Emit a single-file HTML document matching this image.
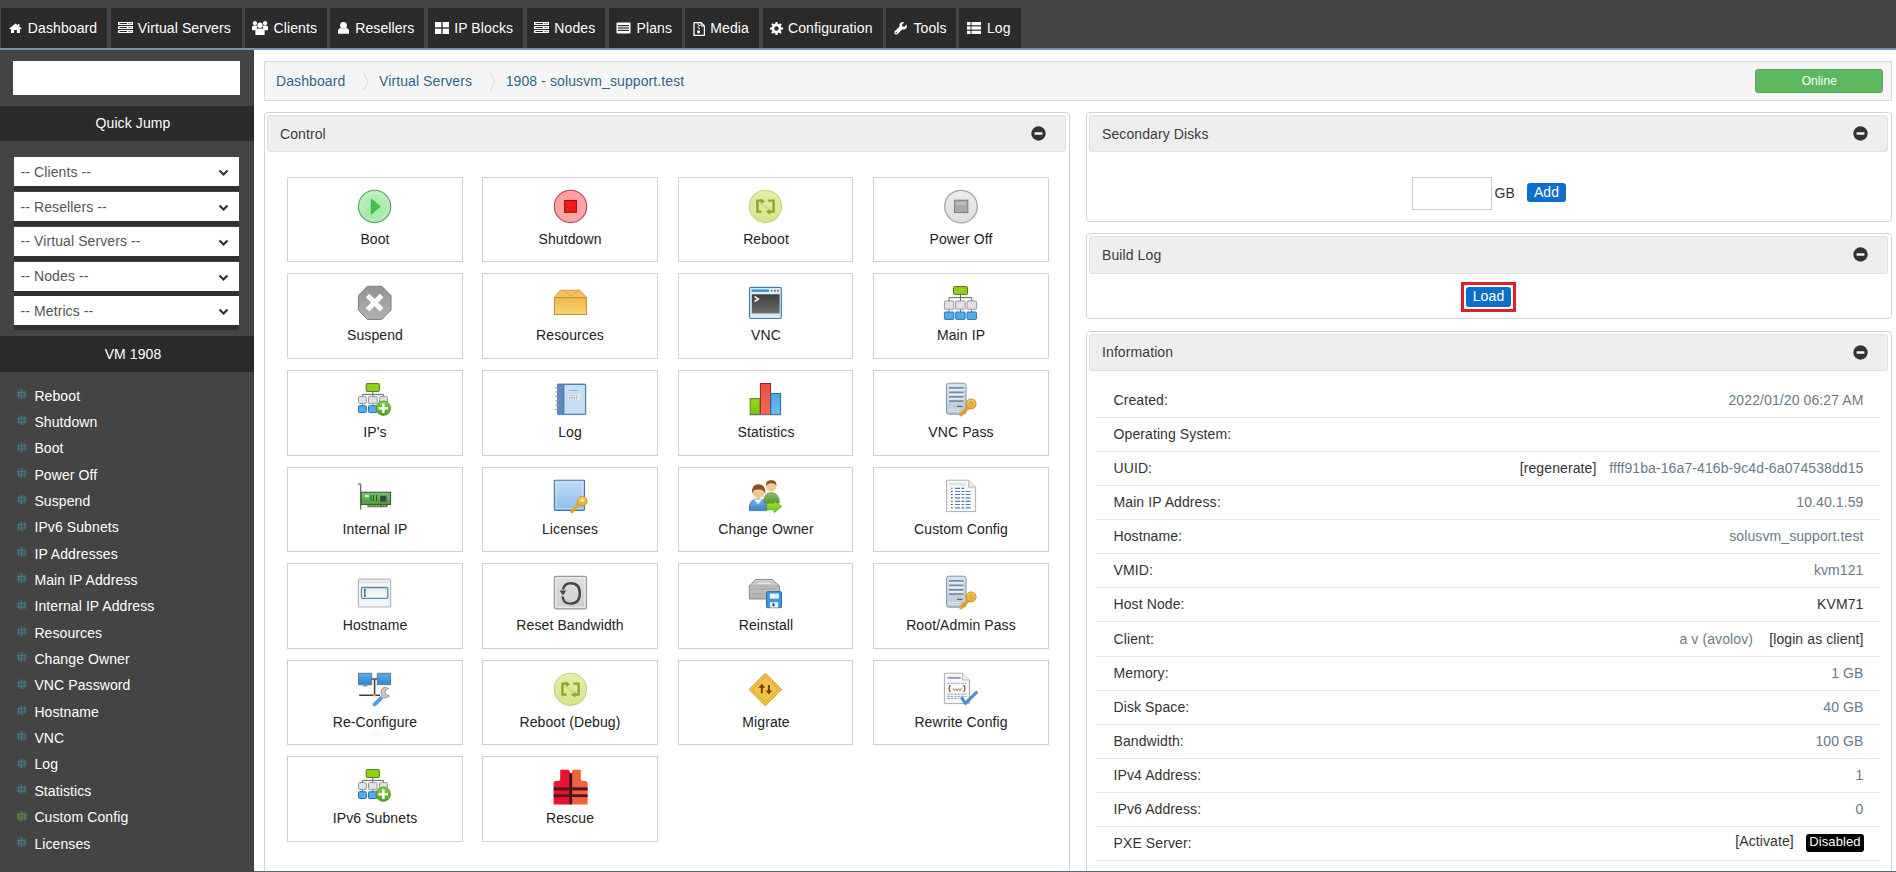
<!DOCTYPE html><html><head><meta charset="utf-8"><title>SolusVM</title><style>
*{box-sizing:border-box;margin:0;padding:0}
html,body{width:1896px;height:872px;overflow:hidden;background:#fff;font-family:"Liberation Sans", sans-serif;}
.a{position:absolute}
.t{position:absolute;white-space:nowrap;letter-spacing:0.1px}
</style></head><body>
<div class="a" style="left:0;top:0;width:1896px;height:48px;background:#454545"></div>
<div class="a" style="left:0;top:48px;width:1896px;height:2px;background:#7a8fb1"></div>
<div class="a" style="left:1px;top:8px;width:106px;height:40px;background:#2b2b2b"></div>
<div class="a" style="left:9px;top:22.7px;line-height:0"><svg width="13" height="10.5" viewBox="0 0 14 12" preserveAspectRatio="none"><path d="M7 0.5 L0.3 6.2 L1.3 7.2 L2.2 6.5 V11.5 H5.5 V8 H8.5 V11.5 H11.8 V6.5 L12.7 7.2 L13.7 6.2 L11.2 4.1 V1 H9.6 V2.7 Z" fill="#fff"/></svg></div>
<div class="t" style="left:27.8px;top:19.65px;font-size:14px;line-height:17px;color:#fff;font-weight:normal;">Dashboard</div>
<div class="a" style="left:111px;top:8px;width:131px;height:40px;background:#2b2b2b"></div>
<div class="a" style="left:118px;top:22px;line-height:0"><svg width="15" height="12" viewBox="0 0 15 12"><g fill="#fff"><rect x="0" y="0" width="15" height="3"/><rect x="0" y="4" width="15" height="3"/><rect x="0" y="8" width="15" height="3"/></g><g fill="#2b2b2b"><rect x="1.5" y="1" width="7.5" height="1"/><rect x="1.5" y="5" width="7.5" height="1"/><rect x="1.5" y="9" width="7.5" height="1"/><rect x="10.5" y="1" width="1" height="1"/><rect x="12.5" y="1" width="1" height="1"/><rect x="10.5" y="5" width="1" height="1"/><rect x="12.5" y="5" width="1" height="1"/><rect x="10.5" y="9" width="1" height="1"/><rect x="12.5" y="9" width="1" height="1"/></g></svg></div>
<div class="t" style="left:137.8px;top:19.65px;font-size:14px;line-height:17px;color:#fff;font-weight:normal;">Virtual Servers</div>
<div class="a" style="left:245.2px;top:8px;width:81.40000000000003px;height:40px;background:#2b2b2b"></div>
<div class="a" style="left:252px;top:21px;line-height:0"><svg width="16" height="14" viewBox="0 0 16 14"><g fill="#fff"><circle cx="2.9" cy="2.2" r="2.1"/><circle cx="13.1" cy="2.2" r="2.1"/><path d="M0 9.2 V6.2 Q0 4.4 2 4.4 H4 Q5 4.4 5.4 5.2 Q4.6 6.6 4.6 9.2 Z"/><path d="M16 9.2 V6.2 Q16 4.4 14 4.4 H12 Q11 4.4 10.6 5.2 Q11.4 6.6 11.4 9.2 Z"/><circle cx="8" cy="4.3" r="2.7"/><path d="M3.4 13.9 V10.2 Q3.4 7.4 6 7.4 H10 Q12.6 7.4 12.6 10.2 V13.9 Z"/></g></svg></div>
<div class="t" style="left:273.5px;top:19.65px;font-size:14px;line-height:17px;color:#fff;font-weight:normal;">Clients</div>
<div class="a" style="left:330.2px;top:8px;width:93.90000000000003px;height:40px;background:#2b2b2b"></div>
<div class="a" style="left:338px;top:22px;line-height:0"><svg width="11" height="12" viewBox="0 0 11 12"><g fill="#fff"><circle cx="5.5" cy="3.4" r="3.4"/><path d="M0 11.8 V9.5 Q0 6.3 3 6.1 Q5.5 7.9 8 6.1 Q11 6.3 11 9.5 V11.8 Z"/></g></svg></div>
<div class="t" style="left:355.2px;top:19.65px;font-size:14px;line-height:17px;color:#fff;font-weight:normal;">Resellers</div>
<div class="a" style="left:428.1px;top:8px;width:94.69999999999993px;height:40px;background:#2b2b2b"></div>
<div class="a" style="left:435px;top:22px;line-height:0"><svg width="14" height="12" viewBox="0 0 14 12"><g fill="#fff"><rect x="0" y="0" width="6.3" height="5.3"/><rect x="7.7" y="0" width="6.3" height="5.3"/><rect x="0" y="6.7" width="6.3" height="5.3"/><rect x="7.7" y="6.7" width="6.3" height="5.3"/></g></svg></div>
<div class="t" style="left:454.2px;top:19.65px;font-size:14px;line-height:17px;color:#fff;font-weight:normal;">IP Blocks</div>
<div class="a" style="left:527px;top:8px;width:78px;height:40px;background:#2b2b2b"></div>
<div class="a" style="left:534px;top:22px;line-height:0"><svg width="15" height="12" viewBox="0 0 15 12"><g fill="#fff"><rect x="0" y="0" width="15" height="3"/><rect x="0" y="4" width="15" height="3"/><rect x="0" y="8" width="15" height="3"/></g><g fill="#2b2b2b"><rect x="1.5" y="1" width="7.5" height="1"/><rect x="1.5" y="5" width="7.5" height="1"/><rect x="1.5" y="9" width="7.5" height="1"/><rect x="10.5" y="1" width="1" height="1"/><rect x="12.5" y="1" width="1" height="1"/><rect x="10.5" y="5" width="1" height="1"/><rect x="12.5" y="5" width="1" height="1"/><rect x="10.5" y="9" width="1" height="1"/><rect x="12.5" y="9" width="1" height="1"/></g></svg></div>
<div class="t" style="left:554.3px;top:19.65px;font-size:14px;line-height:17px;color:#fff;font-weight:normal;">Nodes</div>
<div class="a" style="left:609.3px;top:8px;width:72.70000000000005px;height:40px;background:#2b2b2b"></div>
<div class="a" style="left:616px;top:22px;line-height:0"><svg width="15" height="12" viewBox="0 0 15 12"><rect x="0.5" y="0.5" width="14" height="11" rx="1" fill="#fff"/><g fill="#2b2b2b"><rect x="2" y="3" width="11" height="1.2"/><rect x="2" y="5.4" width="11" height="1.2"/><rect x="2" y="7.8" width="11" height="1.2"/></g></svg></div>
<div class="t" style="left:636.5px;top:19.65px;font-size:14px;line-height:17px;color:#fff;font-weight:normal;">Plans</div>
<div class="a" style="left:685.1px;top:8px;width:73.89999999999998px;height:40px;background:#2b2b2b"></div>
<div class="a" style="left:693px;top:22px;line-height:0"><svg width="12" height="14" viewBox="0 0 12 14"><path d="M1 0.6 H8 L11.4 4 V13.4 H1 Z" fill="none" stroke="#fff" stroke-width="1.3"/><path d="M8 0.6 V4 H11.4" fill="none" stroke="#fff" stroke-width="1"/><g fill="#fff"><rect x="4.5" y="1.5" width="1.5" height="1.2"/><rect x="5.5" y="3" width="1.5" height="1.2"/><rect x="4.5" y="4.5" width="1.5" height="1.2"/><rect x="5.5" y="6" width="1.5" height="1.2"/><circle cx="5.6" cy="9.8" r="1.6"/></g></svg></div>
<div class="t" style="left:710.3px;top:19.65px;font-size:14px;line-height:17px;color:#fff;font-weight:normal;">Media</div>
<div class="a" style="left:763.3px;top:8px;width:119.70000000000005px;height:40px;background:#2b2b2b"></div>
<div class="a" style="left:770px;top:22px;line-height:0"><svg width="13" height="13" viewBox="0 0 14 14"><path fill="#fff" d="M6 0 H8 L8.4 2 L9.6 2.5 L11.3 1.4 L12.6 2.7 L11.5 4.4 L12 5.6 L14 6 V8 L12 8.4 L11.5 9.6 L12.6 11.3 L11.3 12.6 L9.6 11.5 L8.4 12 L8 14 H6 L5.6 12 L4.4 11.5 L2.7 12.6 L1.4 11.3 L2.5 9.6 L2 8.4 L0 8 V6 L2 5.6 L2.5 4.4 L1.4 2.7 L2.7 1.4 L4.4 2.5 L5.6 2 Z M7 4.6 A2.4 2.4 0 1 0 7 9.4 A2.4 2.4 0 1 0 7 4.6 Z"/></svg></div>
<div class="t" style="left:788.0px;top:19.65px;font-size:14px;line-height:17px;color:#fff;font-weight:normal;">Configuration</div>
<div class="a" style="left:886.1px;top:8px;width:69.89999999999998px;height:40px;background:#2b2b2b"></div>
<div class="a" style="left:894px;top:22px;line-height:0"><svg width="13" height="13" viewBox="0 0 13 13"><path fill="#fff" d="M12.6 2.6 L10.4 4.8 L8.3 4.6 L8.1 2.6 L10.3 0.4 Q7.7 -0.6 6.3 1 Q5 2.5 5.6 4.4 L0.7 9.3 Q-0.2 10.6 0.8 11.9 Q2.2 13.1 3.6 12 L8.5 7.3 Q10.6 7.9 12 6.5 Q13.4 5 12.6 2.6 Z"/><circle cx="2.2" cy="10.8" r="0.8" fill="#2b2b2b"/></svg></div>
<div class="t" style="left:913.5px;top:19.65px;font-size:14px;line-height:17px;color:#fff;font-weight:normal;">Tools</div>
<div class="a" style="left:959.1px;top:8px;width:61.60000000000002px;height:40px;background:#2b2b2b"></div>
<div class="a" style="left:967px;top:22px;line-height:0"><svg width="14" height="12" viewBox="0 0 14 12"><g fill="#fff"><rect x="0" y="0" width="3.5" height="3.2"/><rect x="4.5" y="0" width="9.5" height="3.2"/><rect x="0" y="4.4" width="3.5" height="3.2"/><rect x="4.5" y="4.4" width="9.5" height="3.2"/><rect x="0" y="8.8" width="3.5" height="3.2"/><rect x="4.5" y="8.8" width="9.5" height="3.2"/></g></svg></div>
<div class="t" style="left:986.9px;top:19.65px;font-size:14px;line-height:17px;color:#fff;font-weight:normal;">Log</div>
<div class="a" style="left:0;top:50px;width:254px;height:822px;background:#444"></div>
<div class="a" style="left:253px;top:50px;width:1px;height:822px;background:#3a3a3a"></div>
<div class="a" style="left:13px;top:61px;width:227px;height:34px;background:#fff"></div>
<div class="a" style="left:0;top:106px;width:254px;height:34.5px;background:#2b2b2b"></div>
<div class="t" style="left:-167px;width:600px;text-align:center;top:115.05px;font-size:14px;line-height:17px;color:#fff;font-weight:normal;">Quick Jump</div>
<div class="a" style="left:14px;top:157px;width:225px;height:29px;background:#fff"></div>
<div class="a" style="left:14px;top:186px;width:225px;height:5px;background:#303030"></div>
<div class="t" style="left:20.5px;top:164.25px;font-size:14px;line-height:17px;color:#555;font-weight:normal;">-- Clients --</div>
<svg class="a" style="left:218px;top:169px" width="11" height="8" viewBox="0 0 11 8"><path d="M1.5 1.5 L5.5 5.5 L9.5 1.5" fill="none" stroke="#333" stroke-width="2.2"/></svg>
<div class="a" style="left:14px;top:192px;width:225px;height:29px;background:#fff"></div>
<div class="a" style="left:14px;top:221px;width:225px;height:5px;background:#303030"></div>
<div class="t" style="left:20.5px;top:199.25px;font-size:14px;line-height:17px;color:#555;font-weight:normal;">-- Resellers --</div>
<svg class="a" style="left:218px;top:204px" width="11" height="8" viewBox="0 0 11 8"><path d="M1.5 1.5 L5.5 5.5 L9.5 1.5" fill="none" stroke="#333" stroke-width="2.2"/></svg>
<div class="a" style="left:14px;top:227px;width:225px;height:29px;background:#fff"></div>
<div class="a" style="left:14px;top:256px;width:225px;height:5px;background:#303030"></div>
<div class="t" style="left:20.5px;top:233.25px;font-size:14px;line-height:17px;color:#555;font-weight:normal;">-- Virtual Servers --</div>
<svg class="a" style="left:218px;top:239px" width="11" height="8" viewBox="0 0 11 8"><path d="M1.5 1.5 L5.5 5.5 L9.5 1.5" fill="none" stroke="#333" stroke-width="2.2"/></svg>
<div class="a" style="left:14px;top:262px;width:225px;height:29px;background:#fff"></div>
<div class="a" style="left:14px;top:291px;width:225px;height:5px;background:#303030"></div>
<div class="t" style="left:20.5px;top:268.25px;font-size:14px;line-height:17px;color:#555;font-weight:normal;">-- Nodes --</div>
<svg class="a" style="left:218px;top:274px" width="11" height="8" viewBox="0 0 11 8"><path d="M1.5 1.5 L5.5 5.5 L9.5 1.5" fill="none" stroke="#333" stroke-width="2.2"/></svg>
<div class="a" style="left:14px;top:296px;width:225px;height:29px;background:#fff"></div>
<div class="a" style="left:14px;top:325px;width:225px;height:5px;background:#303030"></div>
<div class="t" style="left:20.5px;top:303.25px;font-size:14px;line-height:17px;color:#555;font-weight:normal;">-- Metrics --</div>
<svg class="a" style="left:218px;top:308px" width="11" height="8" viewBox="0 0 11 8"><path d="M1.5 1.5 L5.5 5.5 L9.5 1.5" fill="none" stroke="#333" stroke-width="2.2"/></svg>
<div class="a" style="left:0;top:336px;width:254px;height:35.6px;background:#2b2b2b"></div>
<div class="t" style="left:-167px;width:600px;text-align:center;top:345.65px;font-size:14px;line-height:17px;color:#fff;font-weight:normal;">VM 1908</div>
<svg class="a" style="left:15.5px;top:387.90px" width="12" height="12" viewBox="0 0 12 12"><path d="M3 1.5 H8.5 L11 4 V8.5 L8.5 11 H3 L0.8 8.5 V4 Z" fill="#37606c" opacity="0.6"/><path d="M1.5 4.5 H10 M1.5 8 H10 M2.5 3.5 V9.5 M5.5 1.5 V11 M9 3 V9.5" stroke="#5a8c96" stroke-width="1" opacity="0.55"/></svg>
<div class="t" style="left:34.4px;top:387.55px;font-size:14px;line-height:17px;color:#fff;font-weight:normal;">Reboot</div>
<svg class="a" style="left:15.5px;top:414.25px" width="12" height="12" viewBox="0 0 12 12"><path d="M3 1.5 H8.5 L11 4 V8.5 L8.5 11 H3 L0.8 8.5 V4 Z" fill="#37606c" opacity="0.6"/><path d="M1.5 4.5 H10 M1.5 8 H10 M2.5 3.5 V9.5 M5.5 1.5 V11 M9 3 V9.5" stroke="#5a8c96" stroke-width="1" opacity="0.55"/></svg>
<div class="t" style="left:34.4px;top:413.90px;font-size:14px;line-height:17px;color:#fff;font-weight:normal;">Shutdown</div>
<svg class="a" style="left:15.5px;top:440.60px" width="12" height="12" viewBox="0 0 12 12"><path d="M3 1.5 H8.5 L11 4 V8.5 L8.5 11 H3 L0.8 8.5 V4 Z" fill="#37606c" opacity="0.6"/><path d="M1.5 4.5 H10 M1.5 8 H10 M2.5 3.5 V9.5 M5.5 1.5 V11 M9 3 V9.5" stroke="#5a8c96" stroke-width="1" opacity="0.55"/></svg>
<div class="t" style="left:34.4px;top:440.25px;font-size:14px;line-height:17px;color:#fff;font-weight:normal;">Boot</div>
<svg class="a" style="left:15.5px;top:466.95px" width="12" height="12" viewBox="0 0 12 12"><path d="M3 1.5 H8.5 L11 4 V8.5 L8.5 11 H3 L0.8 8.5 V4 Z" fill="#37606c" opacity="0.6"/><path d="M1.5 4.5 H10 M1.5 8 H10 M2.5 3.5 V9.5 M5.5 1.5 V11 M9 3 V9.5" stroke="#5a8c96" stroke-width="1" opacity="0.55"/></svg>
<div class="t" style="left:34.4px;top:466.60px;font-size:14px;line-height:17px;color:#fff;font-weight:normal;">Power Off</div>
<svg class="a" style="left:15.5px;top:493.30px" width="12" height="12" viewBox="0 0 12 12"><path d="M3 1.5 H8.5 L11 4 V8.5 L8.5 11 H3 L0.8 8.5 V4 Z" fill="#37606c" opacity="0.6"/><path d="M1.5 4.5 H10 M1.5 8 H10 M2.5 3.5 V9.5 M5.5 1.5 V11 M9 3 V9.5" stroke="#5a8c96" stroke-width="1" opacity="0.55"/></svg>
<div class="t" style="left:34.4px;top:492.95px;font-size:14px;line-height:17px;color:#fff;font-weight:normal;">Suspend</div>
<svg class="a" style="left:15.5px;top:519.65px" width="12" height="12" viewBox="0 0 12 12"><path d="M3 1.5 H8.5 L11 4 V8.5 L8.5 11 H3 L0.8 8.5 V4 Z" fill="#37606c" opacity="0.6"/><path d="M1.5 4.5 H10 M1.5 8 H10 M2.5 3.5 V9.5 M5.5 1.5 V11 M9 3 V9.5" stroke="#5a8c96" stroke-width="1" opacity="0.55"/></svg>
<div class="t" style="left:34.4px;top:519.30px;font-size:14px;line-height:17px;color:#fff;font-weight:normal;">IPv6 Subnets</div>
<svg class="a" style="left:15.5px;top:546.00px" width="12" height="12" viewBox="0 0 12 12"><path d="M3 1.5 H8.5 L11 4 V8.5 L8.5 11 H3 L0.8 8.5 V4 Z" fill="#37606c" opacity="0.6"/><path d="M1.5 4.5 H10 M1.5 8 H10 M2.5 3.5 V9.5 M5.5 1.5 V11 M9 3 V9.5" stroke="#5a8c96" stroke-width="1" opacity="0.55"/></svg>
<div class="t" style="left:34.4px;top:545.65px;font-size:14px;line-height:17px;color:#fff;font-weight:normal;">IP Addresses</div>
<svg class="a" style="left:15.5px;top:572.35px" width="12" height="12" viewBox="0 0 12 12"><path d="M3 1.5 H8.5 L11 4 V8.5 L8.5 11 H3 L0.8 8.5 V4 Z" fill="#37606c" opacity="0.6"/><path d="M1.5 4.5 H10 M1.5 8 H10 M2.5 3.5 V9.5 M5.5 1.5 V11 M9 3 V9.5" stroke="#5a8c96" stroke-width="1" opacity="0.55"/></svg>
<div class="t" style="left:34.4px;top:572.00px;font-size:14px;line-height:17px;color:#fff;font-weight:normal;">Main IP Address</div>
<svg class="a" style="left:15.5px;top:598.70px" width="12" height="12" viewBox="0 0 12 12"><path d="M3 1.5 H8.5 L11 4 V8.5 L8.5 11 H3 L0.8 8.5 V4 Z" fill="#37606c" opacity="0.6"/><path d="M1.5 4.5 H10 M1.5 8 H10 M2.5 3.5 V9.5 M5.5 1.5 V11 M9 3 V9.5" stroke="#5a8c96" stroke-width="1" opacity="0.55"/></svg>
<div class="t" style="left:34.4px;top:598.35px;font-size:14px;line-height:17px;color:#fff;font-weight:normal;">Internal IP Address</div>
<svg class="a" style="left:15.5px;top:625.05px" width="12" height="12" viewBox="0 0 12 12"><path d="M3 1.5 H8.5 L11 4 V8.5 L8.5 11 H3 L0.8 8.5 V4 Z" fill="#37606c" opacity="0.6"/><path d="M1.5 4.5 H10 M1.5 8 H10 M2.5 3.5 V9.5 M5.5 1.5 V11 M9 3 V9.5" stroke="#5a8c96" stroke-width="1" opacity="0.55"/></svg>
<div class="t" style="left:34.4px;top:624.70px;font-size:14px;line-height:17px;color:#fff;font-weight:normal;">Resources</div>
<svg class="a" style="left:15.5px;top:651.40px" width="12" height="12" viewBox="0 0 12 12"><path d="M3 1.5 H8.5 L11 4 V8.5 L8.5 11 H3 L0.8 8.5 V4 Z" fill="#37606c" opacity="0.6"/><path d="M1.5 4.5 H10 M1.5 8 H10 M2.5 3.5 V9.5 M5.5 1.5 V11 M9 3 V9.5" stroke="#5a8c96" stroke-width="1" opacity="0.55"/></svg>
<div class="t" style="left:34.4px;top:651.05px;font-size:14px;line-height:17px;color:#fff;font-weight:normal;">Change Owner</div>
<svg class="a" style="left:15.5px;top:677.75px" width="12" height="12" viewBox="0 0 12 12"><path d="M3 1.5 H8.5 L11 4 V8.5 L8.5 11 H3 L0.8 8.5 V4 Z" fill="#37606c" opacity="0.6"/><path d="M1.5 4.5 H10 M1.5 8 H10 M2.5 3.5 V9.5 M5.5 1.5 V11 M9 3 V9.5" stroke="#5a8c96" stroke-width="1" opacity="0.55"/></svg>
<div class="t" style="left:34.4px;top:677.40px;font-size:14px;line-height:17px;color:#fff;font-weight:normal;">VNC Password</div>
<svg class="a" style="left:15.5px;top:704.10px" width="12" height="12" viewBox="0 0 12 12"><path d="M3 1.5 H8.5 L11 4 V8.5 L8.5 11 H3 L0.8 8.5 V4 Z" fill="#37606c" opacity="0.6"/><path d="M1.5 4.5 H10 M1.5 8 H10 M2.5 3.5 V9.5 M5.5 1.5 V11 M9 3 V9.5" stroke="#5a8c96" stroke-width="1" opacity="0.55"/></svg>
<div class="t" style="left:34.4px;top:703.75px;font-size:14px;line-height:17px;color:#fff;font-weight:normal;">Hostname</div>
<svg class="a" style="left:15.5px;top:730.45px" width="12" height="12" viewBox="0 0 12 12"><path d="M3 1.5 H8.5 L11 4 V8.5 L8.5 11 H3 L0.8 8.5 V4 Z" fill="#37606c" opacity="0.6"/><path d="M1.5 4.5 H10 M1.5 8 H10 M2.5 3.5 V9.5 M5.5 1.5 V11 M9 3 V9.5" stroke="#5a8c96" stroke-width="1" opacity="0.55"/></svg>
<div class="t" style="left:34.4px;top:730.10px;font-size:14px;line-height:17px;color:#fff;font-weight:normal;">VNC</div>
<svg class="a" style="left:15.5px;top:756.80px" width="12" height="12" viewBox="0 0 12 12"><path d="M3 1.5 H8.5 L11 4 V8.5 L8.5 11 H3 L0.8 8.5 V4 Z" fill="#37606c" opacity="0.6"/><path d="M1.5 4.5 H10 M1.5 8 H10 M2.5 3.5 V9.5 M5.5 1.5 V11 M9 3 V9.5" stroke="#5a8c96" stroke-width="1" opacity="0.55"/></svg>
<div class="t" style="left:34.4px;top:756.45px;font-size:14px;line-height:17px;color:#fff;font-weight:normal;">Log</div>
<svg class="a" style="left:15.5px;top:783.15px" width="12" height="12" viewBox="0 0 12 12"><path d="M3 1.5 H8.5 L11 4 V8.5 L8.5 11 H3 L0.8 8.5 V4 Z" fill="#37606c" opacity="0.6"/><path d="M1.5 4.5 H10 M1.5 8 H10 M2.5 3.5 V9.5 M5.5 1.5 V11 M9 3 V9.5" stroke="#5a8c96" stroke-width="1" opacity="0.55"/></svg>
<div class="t" style="left:34.4px;top:782.80px;font-size:14px;line-height:17px;color:#fff;font-weight:normal;">Statistics</div>
<svg class="a" style="left:15.5px;top:809.50px" width="12" height="12" viewBox="0 0 12 12"><path d="M3 1.5 H8.5 L11 4 V8.5 L8.5 11 H3 L0.8 8.5 V4 Z" fill="#4f7a3c" opacity="0.6"/><path d="M1.5 4.5 H10 M1.5 8 H10 M2.5 3.5 V9.5 M5.5 1.5 V11 M9 3 V9.5" stroke="#6a9a58" stroke-width="1" opacity="0.55"/></svg>
<div class="t" style="left:34.4px;top:809.15px;font-size:14px;line-height:17px;color:#fff;font-weight:normal;">Custom Config</div>
<svg class="a" style="left:15.5px;top:835.85px" width="12" height="12" viewBox="0 0 12 12"><path d="M3 1.5 H8.5 L11 4 V8.5 L8.5 11 H3 L0.8 8.5 V4 Z" fill="#37606c" opacity="0.6"/><path d="M1.5 4.5 H10 M1.5 8 H10 M2.5 3.5 V9.5 M5.5 1.5 V11 M9 3 V9.5" stroke="#5a8c96" stroke-width="1" opacity="0.55"/></svg>
<div class="t" style="left:34.4px;top:835.50px;font-size:14px;line-height:17px;color:#fff;font-weight:normal;">Licenses</div>
<div class="a" style="left:264px;top:61px;width:1627.5px;height:39.5px;background:#f5f5f5;border:1px solid #dcdcdc"></div>
<div class="t" style="left:276px;top:72.65px;font-size:14px;line-height:17px;color:#2d6889;font-weight:normal;">Dashboard</div>
<div class="t" style="left:379px;top:72.65px;font-size:14px;line-height:17px;color:#2d6889;font-weight:normal;">Virtual Servers</div>
<div class="t" style="left:505.7px;top:72.65px;font-size:14px;line-height:17px;color:#2d6889;font-weight:normal;">1908 - solusvm_support.test</div>
<svg class="a" style="left:362.5px;top:72px" width="6" height="19" viewBox="0 0 6 19"><path d="M0.5 0.5 L5 9.5 L0.5 18.5" fill="none" stroke="#e2e2e2" stroke-width="1.5"/></svg>
<svg class="a" style="left:489.5px;top:72px" width="6" height="19" viewBox="0 0 6 19"><path d="M0.5 0.5 L5 9.5 L0.5 18.5" fill="none" stroke="#e2e2e2" stroke-width="1.5"/></svg>
<div class="a" style="left:1755px;top:69px;width:128px;height:24px;background:#5cb85c;border:1px solid #64a064;border-radius:3px"></div>
<div class="t" style="left:1519.3px;width:600px;text-align:center;top:74.04px;font-size:12px;line-height:14px;color:#fff;font-weight:normal;">Online</div>
<div class="a" style="left:264px;top:112.4px;width:805.5px;height:767.6px;border:1px solid #d2d2d2;border-radius:4px;background:#fff"></div>
<div class="a" style="left:267px;top:115.4px;width:798.5px;height:36.89999999999999px;background:#eee;border-radius:3px;border:1px solid #e0e0e0"></div>
<div class="t" style="left:280px;top:125.65px;font-size:14px;line-height:17px;color:#3c3c3c;font-weight:normal;">Control</div>
<svg class="a" style="left:1031.3px;top:126.4px" width="15" height="15" viewBox="0 0 15 15"><circle cx="7.5" cy="7.5" r="7.2" fill="#333"/><rect x="3.6" y="6.3" width="7.8" height="2.4" fill="#fff"/></svg>
<div class="a" style="left:1086px;top:112.4px;width:805.5px;height:109.6px;border:1px solid #d2d2d2;border-radius:4px;background:#fff"></div>
<div class="a" style="left:1089px;top:115.4px;width:798.5px;height:36.89999999999999px;background:#eee;border-radius:3px;border:1px solid #e0e0e0"></div>
<div class="t" style="left:1102px;top:125.65px;font-size:14px;line-height:17px;color:#3c3c3c;font-weight:normal;">Secondary Disks</div>
<svg class="a" style="left:1853.3px;top:126.4px" width="15" height="15" viewBox="0 0 15 15"><circle cx="7.5" cy="7.5" r="7.2" fill="#333"/><rect x="3.6" y="6.3" width="7.8" height="2.4" fill="#fff"/></svg>
<div class="a" style="left:1086px;top:233.4px;width:805.5px;height:86.1px;border:1px solid #d2d2d2;border-radius:4px;background:#fff"></div>
<div class="a" style="left:1089px;top:236.4px;width:798.5px;height:37.79999999999997px;background:#eee;border-radius:3px;border:1px solid #e0e0e0"></div>
<div class="t" style="left:1102px;top:246.65px;font-size:14px;line-height:17px;color:#3c3c3c;font-weight:normal;">Build Log</div>
<svg class="a" style="left:1853.3px;top:247.4px" width="15" height="15" viewBox="0 0 15 15"><circle cx="7.5" cy="7.5" r="7.2" fill="#333"/><rect x="3.6" y="6.3" width="7.8" height="2.4" fill="#fff"/></svg>
<div class="a" style="left:1086px;top:330.6px;width:805.5px;height:559.4px;border:1px solid #d2d2d2;border-radius:4px;background:#fff"></div>
<div class="a" style="left:1089px;top:333.6px;width:798.5px;height:37.199999999999974px;background:#eee;border-radius:3px;border:1px solid #e0e0e0"></div>
<div class="t" style="left:1102px;top:343.85px;font-size:14px;line-height:17px;color:#3c3c3c;font-weight:normal;">Information</div>
<svg class="a" style="left:1853.3px;top:344.6px" width="15" height="15" viewBox="0 0 15 15"><circle cx="7.5" cy="7.5" r="7.2" fill="#333"/><rect x="3.6" y="6.3" width="7.8" height="2.4" fill="#fff"/></svg>
<div class="a" style="left:1412px;top:177px;width:80px;height:32.5px;border:1px solid #ccc;background:#fff"></div>
<div class="t" style="left:1494.6px;top:185.15px;font-size:14px;line-height:17px;color:#333;font-weight:normal;">GB</div>
<div class="a" style="left:1527px;top:183px;width:39px;height:18.6px;background:#0d6fcb;border-radius:3px"></div>
<div class="t" style="left:1246.5px;width:600px;text-align:center;top:183.65px;font-size:14px;line-height:17px;color:#fff;font-weight:normal;">Add</div>
<div class="a" style="left:1461px;top:282px;width:54.8px;height:29.8px;border:3px solid #e11f28"></div>
<div class="a" style="left:1466px;top:287px;width:45px;height:19.7px;background:#0d70c8;border-radius:3px"></div>
<div class="t" style="left:1188.5px;width:600px;text-align:center;top:287.65px;font-size:14px;line-height:17px;color:#fff;font-weight:normal;">Load</div>
<div class="t" style="left:1113.5px;top:392.25px;font-size:14px;line-height:17px;color:#333;font-weight:normal;">Created:</div>
<div class="a" style="left:1096.5px;top:417.00px;width:783px;height:1px;background:#e6e6e6"></div>
<div class="t" style="right:32.5px;top:392.25px;font-size:14px;line-height:17px;color:#333;font-weight:normal;"><span style="color:#6a7a8a">2022/01/20 06:27 AM</span></div>
<div class="t" style="left:1113.5px;top:426.29px;font-size:14px;line-height:17px;color:#333;font-weight:normal;">Operating System:</div>
<div class="a" style="left:1096.5px;top:451.08px;width:783px;height:1px;background:#e6e6e6"></div>
<div class="t" style="left:1113.5px;top:460.33px;font-size:14px;line-height:17px;color:#333;font-weight:normal;">UUID:</div>
<div class="a" style="left:1096.5px;top:485.16px;width:783px;height:1px;background:#e6e6e6"></div>
<div class="t" style="right:32.5px;top:460.33px;font-size:14px;line-height:17px;color:#333;font-weight:normal;"><span style="color:#333">[regenerate]</span><span style="display:inline-block;width:12.8px"></span><span style="color:#6a7a8a">ffff91ba-16a7-416b-9c4d-6a074538dd15</span></div>
<div class="t" style="left:1113.5px;top:494.37px;font-size:14px;line-height:17px;color:#333;font-weight:normal;">Main IP Address:</div>
<div class="a" style="left:1096.5px;top:519.24px;width:783px;height:1px;background:#e6e6e6"></div>
<div class="t" style="right:32.5px;top:494.37px;font-size:14px;line-height:17px;color:#333;font-weight:normal;"><span style="color:#6a7a8a">10.40.1.59</span></div>
<div class="t" style="left:1113.5px;top:528.41px;font-size:14px;line-height:17px;color:#333;font-weight:normal;">Hostname:</div>
<div class="a" style="left:1096.5px;top:553.32px;width:783px;height:1px;background:#e6e6e6"></div>
<div class="t" style="right:32.5px;top:528.41px;font-size:14px;line-height:17px;color:#333;font-weight:normal;"><span style="color:#6a7a8a">solusvm_support.test</span></div>
<div class="t" style="left:1113.5px;top:562.45px;font-size:14px;line-height:17px;color:#333;font-weight:normal;">VMID:</div>
<div class="a" style="left:1096.5px;top:587.40px;width:783px;height:1px;background:#e6e6e6"></div>
<div class="t" style="right:32.5px;top:562.45px;font-size:14px;line-height:17px;color:#333;font-weight:normal;"><span style="color:#6a7a8a">kvm121</span></div>
<div class="t" style="left:1113.5px;top:596.49px;font-size:14px;line-height:17px;color:#333;font-weight:normal;">Host Node:</div>
<div class="a" style="left:1096.5px;top:621.48px;width:783px;height:1px;background:#e6e6e6"></div>
<div class="t" style="right:32.5px;top:596.49px;font-size:14px;line-height:17px;color:#333;font-weight:normal;"><span style="color:#333">KVM71</span></div>
<div class="t" style="left:1113.5px;top:630.53px;font-size:14px;line-height:17px;color:#333;font-weight:normal;">Client:</div>
<div class="a" style="left:1096.5px;top:655.56px;width:783px;height:1px;background:#e6e6e6"></div>
<div class="t" style="right:32.5px;top:630.53px;font-size:14px;line-height:17px;color:#333;font-weight:normal;"><span style="color:#6a7a8a">a v (avolov)</span><span style="display:inline-block;width:16.2px"></span><span style="color:#333">[login as client]</span></div>
<div class="t" style="left:1113.5px;top:664.57px;font-size:14px;line-height:17px;color:#333;font-weight:normal;">Memory:</div>
<div class="a" style="left:1096.5px;top:689.64px;width:783px;height:1px;background:#e6e6e6"></div>
<div class="t" style="right:32.5px;top:664.57px;font-size:14px;line-height:17px;color:#333;font-weight:normal;"><span style="color:#6a7a8a">1 GB</span></div>
<div class="t" style="left:1113.5px;top:698.61px;font-size:14px;line-height:17px;color:#333;font-weight:normal;">Disk Space:</div>
<div class="a" style="left:1096.5px;top:723.72px;width:783px;height:1px;background:#e6e6e6"></div>
<div class="t" style="right:32.5px;top:698.61px;font-size:14px;line-height:17px;color:#333;font-weight:normal;"><span style="color:#6a7a8a">40 GB</span></div>
<div class="t" style="left:1113.5px;top:732.65px;font-size:14px;line-height:17px;color:#333;font-weight:normal;">Bandwidth:</div>
<div class="a" style="left:1096.5px;top:757.80px;width:783px;height:1px;background:#e6e6e6"></div>
<div class="t" style="right:32.5px;top:732.65px;font-size:14px;line-height:17px;color:#333;font-weight:normal;"><span style="color:#6a7a8a">100 GB</span></div>
<div class="t" style="left:1113.5px;top:766.69px;font-size:14px;line-height:17px;color:#333;font-weight:normal;">IPv4 Address:</div>
<div class="a" style="left:1096.5px;top:791.88px;width:783px;height:1px;background:#e6e6e6"></div>
<div class="t" style="right:32.5px;top:766.69px;font-size:14px;line-height:17px;color:#333;font-weight:normal;"><span style="color:#6a7a8a">1</span></div>
<div class="t" style="left:1113.5px;top:800.73px;font-size:14px;line-height:17px;color:#333;font-weight:normal;">IPv6 Address:</div>
<div class="a" style="left:1096.5px;top:825.96px;width:783px;height:1px;background:#e6e6e6"></div>
<div class="t" style="right:32.5px;top:800.73px;font-size:14px;line-height:17px;color:#333;font-weight:normal;"><span style="color:#6a7a8a">0</span></div>
<div class="t" style="left:1113.5px;top:834.77px;font-size:14px;line-height:17px;color:#333;font-weight:normal;">PXE Server:</div>
<div class="a" style="left:1096.5px;top:860.04px;width:783px;height:1px;background:#e6e6e6"></div>
<div class="t" style="right:102.20000000000005px;top:833.25px;font-size:14px;line-height:17px;color:#333;font-weight:normal;">[Activate]</div>
<div class="a" style="left:1806px;top:834px;width:58px;height:18px;background:#000;border-radius:3px"></div>
<div class="t" style="left:1535px;width:600px;text-align:center;top:834.10px;font-size:13px;line-height:16px;color:#fff;font-weight:normal;">Disabled</div>
<div class="a" style="left:287px;top:177px;width:176px;height:85px;border:1px solid #d0d0d0"></div>
<div class="a" style="left:350px;top:182px;width:50px;height:50px;line-height:0"><svg width="50" height="50" viewBox="0 0 50 50"><defs><linearGradient id="gboot" x1="0" y1="0" x2="0" y2="1"><stop offset="0" stop-color="#b8f0b8"/><stop offset="1" stop-color="#a4e6a6"/></linearGradient></defs><circle cx="24.6" cy="24.5" r="16.2" fill="url(#gboot)" stroke="#5f9f62" stroke-width="1.1"/><circle cx="24.6" cy="24.5" r="13.5" fill="none" stroke="#c9f5c9" stroke-width="1" opacity="0.7"/><path d="M21.3 17.2 L30.2 24.4 L21.3 32 Z" fill="#3fc54c" stroke="#35a844" stroke-width="0.8" stroke-linejoin="round"/></svg></div>
<div class="t" style="left:75px;width:600px;text-align:center;top:231.25px;font-size:14px;line-height:17px;color:#222;font-weight:normal;">Boot</div>
<div class="a" style="left:482px;top:177px;width:176px;height:85px;border:1px solid #d0d0d0"></div>
<div class="a" style="left:545px;top:182px;width:50px;height:50px;line-height:0"><svg width="50" height="50" viewBox="0 0 50 50"><defs><linearGradient id="gsd" x1="0" y1="0" x2="0" y2="1"><stop offset="0" stop-color="#ff9d9d"/><stop offset="1" stop-color="#ffa8a8"/></linearGradient></defs><circle cx="25.5" cy="24.4" r="16.2" fill="url(#gsd)" stroke="#b3475a" stroke-width="1.1"/><rect x="19.6" y="18.5" width="11.8" height="11.8" fill="#f01818" stroke="#9a0c10" stroke-width="1"/></svg></div>
<div class="t" style="left:270px;width:600px;text-align:center;top:231.25px;font-size:14px;line-height:17px;color:#222;font-weight:normal;">Shutdown</div>
<div class="a" style="left:678px;top:177px;width:175px;height:85px;border:1px solid #d0d0d0"></div>
<div class="a" style="left:740px;top:182px;width:50px;height:50px;line-height:0"><svg width="50" height="50" viewBox="0 0 50 50"><defs><linearGradient id="grb" x1="0" y1="0" x2="0" y2="1"><stop offset="0" stop-color="#e6efaa"/><stop offset="1" stop-color="#d6e38c"/></linearGradient></defs><circle cx="25.4" cy="24.3" r="16.1" fill="url(#grb)" stroke="#c3d57c" stroke-width="1.1"/><path d="M22.5 18.6 H17.4 V29.6 H21.5" fill="none" stroke="#8aa62c" stroke-width="2.4"/><path d="M20.5 16.3 L25 19.2 L20.8 22.2 Z" fill="#8aa62c"/><path d="M28.2 18.6 H33.6 V29.6 H29" fill="none" stroke="#8aa62c" stroke-width="2.4"/><path d="M30.5 26.7 L26 29.6 L30.2 32.7 Z" fill="#8aa62c"/><path d="M20 21 L30 28" stroke="#c9dc6a" stroke-width="2.5" opacity="0.6"/></svg></div>
<div class="t" style="left:466px;width:600px;text-align:center;top:231.25px;font-size:14px;line-height:17px;color:#222;font-weight:normal;">Reboot</div>
<div class="a" style="left:873px;top:177px;width:176px;height:85px;border:1px solid #d0d0d0"></div>
<div class="a" style="left:935px;top:182px;width:50px;height:50px;line-height:0"><svg width="50" height="50" viewBox="0 0 50 50"><defs><linearGradient id="gpo" x1="0" y1="0" x2="0" y2="1"><stop offset="0" stop-color="#ededed"/><stop offset="1" stop-color="#dedede"/></linearGradient></defs><circle cx="26" cy="24.6" r="16.3" fill="url(#gpo)" stroke="#a6a6a6" stroke-width="1.3"/><rect x="19.4" y="18.2" width="13.4" height="12.4" fill="#a9a9a9" stroke="#7e7e7e" stroke-width="1"/><rect x="21.2" y="20" width="9.8" height="3" fill="#bdbdbd"/></svg></div>
<div class="t" style="left:661px;width:600px;text-align:center;top:231.25px;font-size:14px;line-height:17px;color:#222;font-weight:normal;">Power Off</div>
<div class="a" style="left:287px;top:273px;width:176px;height:86px;border:1px solid #d0d0d0"></div>
<div class="a" style="left:350px;top:278px;width:50px;height:50px;line-height:0"><svg width="50" height="50" viewBox="0 0 50 50"><defs><linearGradient id="gsu" x1="0" y1="0" x2="0" y2="1"><stop offset="0" stop-color="#939393"/><stop offset="1" stop-color="#b2b2b2"/></linearGradient></defs><path d="M17.4 8.3 H31.8 L41 17.6 V32 L31.8 41.4 H17.4 L8.4 32 V17.6 Z" fill="url(#gsu)" stroke="#7d7d7d" stroke-width="1"/><path d="M17.6 17.6 L31.6 31.8 M31.6 17.6 L17.6 31.8" stroke="#fff" stroke-width="5"/></svg></div>
<div class="t" style="left:75px;width:600px;text-align:center;top:327.25px;font-size:14px;line-height:17px;color:#222;font-weight:normal;">Suspend</div>
<div class="a" style="left:482px;top:273px;width:176px;height:86px;border:1px solid #d0d0d0"></div>
<div class="a" style="left:545px;top:278px;width:50px;height:50px;line-height:0"><svg width="50" height="50" viewBox="0 0 50 50"><defs><linearGradient id="gres" x1="0" y1="0" x2="0" y2="1"><stop offset="0" stop-color="#f0b545"/><stop offset="1" stop-color="#f9d477"/></linearGradient></defs><path d="M15.3 12.2 H34.8 L41.4 19.6 H9.4 Z" fill="#f3c05a" stroke="#c99440" stroke-width="0.9"/><path d="M18 12.5 L26 18 L33 12.5" fill="none" stroke="#e1a640" stroke-width="1"/><rect x="9.4" y="19.6" width="32" height="16.9" fill="url(#gres)" stroke="#c08c3a" stroke-width="1"/></svg></div>
<div class="t" style="left:270px;width:600px;text-align:center;top:327.25px;font-size:14px;line-height:17px;color:#222;font-weight:normal;">Resources</div>
<div class="a" style="left:678px;top:273px;width:175px;height:86px;border:1px solid #d0d0d0"></div>
<div class="a" style="left:740px;top:278px;width:50px;height:50px;line-height:0"><svg width="50" height="50" viewBox="0 0 50 50"><defs><linearGradient id="gvnc" x1="0" y1="0" x2="0" y2="1"><stop offset="0" stop-color="#3c3c3c"/><stop offset="1" stop-color="#6f6f6f"/></linearGradient></defs><rect x="9.5" y="9.3" width="31.8" height="31.2" rx="1.8" fill="#dcecf6" stroke="#3f7fa6" stroke-width="1.2"/><rect x="11.6" y="11.4" width="17.5" height="2.6" fill="#3d98d8"/><circle cx="31.8" cy="12.7" r="1" fill="#2a9aa0"/><circle cx="35" cy="12.7" r="1" fill="#3a70c0"/><circle cx="38" cy="12.7" r="1" fill="#b04060"/><rect x="11.8" y="16.3" width="27.8" height="19.2" fill="url(#gvnc)"/><path d="M14.6 18.6 L18.3 21 L14.6 23.4" fill="none" stroke="#e6e6e6" stroke-width="1.8"/></svg></div>
<div class="t" style="left:466px;width:600px;text-align:center;top:327.25px;font-size:14px;line-height:17px;color:#222;font-weight:normal;">VNC</div>
<div class="a" style="left:873px;top:273px;width:176px;height:86px;border:1px solid #d0d0d0"></div>
<div class="a" style="left:935px;top:278px;width:50px;height:50px;line-height:0"><svg width="50" height="50" viewBox="0 0 50 50"><defs></defs><rect x="18.5" y="8.6" width="14" height="7.8" rx="0.8" fill="#8fd118" stroke="#4e7d0c" stroke-width="1"/><path d="M25.5 16.4 V19.6 M14 23 V19.6 H36.7 V23 M25.5 19.6 V23 M14 31.3 V34 M25.5 31.3 V34 M36.7 31.3 V34" fill="none" stroke="#666" stroke-width="1"/><rect x="9.4" y="23" width="9.4" height="8.2" rx="0.8" fill="#e2e2e2" stroke="#979797" stroke-width="1"/><rect x="20.7" y="23" width="9.4" height="8.2" rx="0.8" fill="#e2e2e2" stroke="#979797" stroke-width="1"/><rect x="32" y="23" width="9.4" height="8.2" rx="0.8" fill="#e2e2e2" stroke="#979797" stroke-width="1"/><rect x="9.4" y="34" width="9.4" height="7.4" rx="0.8" fill="#52aee9" stroke="#2a74b6" stroke-width="1"/><rect x="20.7" y="34" width="9.4" height="7.4" rx="0.8" fill="#52aee9" stroke="#2a74b6" stroke-width="1"/><rect x="32" y="34" width="9.4" height="7.4" rx="0.8" fill="#52aee9" stroke="#2a74b6" stroke-width="1"/></svg></div>
<div class="t" style="left:661px;width:600px;text-align:center;top:327.25px;font-size:14px;line-height:17px;color:#222;font-weight:normal;">Main IP</div>
<div class="a" style="left:287px;top:370px;width:176px;height:86px;border:1px solid #d0d0d0"></div>
<div class="a" style="left:350px;top:375px;width:50px;height:50px;line-height:0"><svg width="50" height="50" viewBox="0 0 50 50"><defs><linearGradient id="gplus" x1="0" y1="0" x2="0" y2="1"><stop offset="0" stop-color="#86d040"/><stop offset="1" stop-color="#4ea020"/></linearGradient></defs><rect x="16.2" y="8.6" width="13.2" height="7.8" rx="0.8" fill="#8fd118" stroke="#4e7d0c" stroke-width="1"/><path d="M22.8 16.4 V19.4 M12.4 21.6 V19.4 H33.4 V21.6 M22.8 19.4 V21.6 M12.4 28.4 V30.7 M22.8 28.4 V30.7" fill="none" stroke="#666" stroke-width="1"/><rect x="8.5" y="21.6" width="7.8" height="6.8" rx="0.8" fill="#e2e2e2" stroke="#979797" stroke-width="1"/><rect x="18.5" y="21.6" width="8.6" height="6.8" rx="0.8" fill="#e2e2e2" stroke="#979797" stroke-width="1"/><rect x="29.6" y="21.6" width="7.8" height="6.8" rx="0.8" fill="#e2e2e2" stroke="#979797" stroke-width="1"/><rect x="8.5" y="30.7" width="7.8" height="6.8" rx="0.8" fill="#52aee9" stroke="#2a74b6" stroke-width="1"/><rect x="18.5" y="30.7" width="8.6" height="6.8" rx="0.8" fill="#52aee9" stroke="#2a74b6" stroke-width="1"/><circle cx="33.3" cy="33.2" r="7.2" fill="url(#gplus)" stroke="#4a8a1a" stroke-width="0.8"/><path d="M33.3 28.4 V38 M28.5 33.2 H38.1" stroke="#fff" stroke-width="2.6"/></svg></div>
<div class="t" style="left:75px;width:600px;text-align:center;top:424.25px;font-size:14px;line-height:17px;color:#222;font-weight:normal;">IP's</div>
<div class="a" style="left:482px;top:370px;width:176px;height:86px;border:1px solid #d0d0d0"></div>
<div class="a" style="left:545px;top:375px;width:50px;height:50px;line-height:0"><svg width="50" height="50" viewBox="0 0 50 50"><defs></defs><rect x="12.4" y="9" width="28.4" height="30.6" rx="0.8" fill="#5a88c0" stroke="#46709e" stroke-width="0.8"/><rect x="18.9" y="10" width="21" height="28.6" fill="#c7def6"/><path d="M18.9 10 V38.6" stroke="#3c6490" stroke-width="0.8"/><path d="M10.2 12.6 H13.5 M10.2 17 H13.5 M10.2 21.4 H13.5 M10.2 25.8 H13.5 M10.2 30.2 H13.5 M10.2 34.6 H13.5" stroke="#9aa6b4" stroke-width="1.2"/><rect x="23.5" y="19.6" width="11" height="5.4" fill="#f4f8fc"/><path d="M24 20.8 H33.5 M24 22.5 H33.5 M24 24 H33" stroke="#506070" stroke-width="0.6" stroke-dasharray="1.5 0.8"/><path d="M24 15.5 H33" stroke="#8ab0d8" stroke-width="0.9"/></svg></div>
<div class="t" style="left:270px;width:600px;text-align:center;top:424.25px;font-size:14px;line-height:17px;color:#222;font-weight:normal;">Log</div>
<div class="a" style="left:678px;top:370px;width:175px;height:86px;border:1px solid #d0d0d0"></div>
<div class="a" style="left:740px;top:375px;width:50px;height:50px;line-height:0"><svg width="50" height="50" viewBox="0 0 50 50"><defs><linearGradient id="gs1" x1="0" y1="0" x2="0" y2="1"><stop offset="0" stop-color="#98d820"/><stop offset="1" stop-color="#78c808"/></linearGradient><linearGradient id="gs2" x1="0" y1="0" x2="0" y2="1"><stop offset="0" stop-color="#e4503a"/><stop offset="1" stop-color="#f86a5a"/></linearGradient><linearGradient id="gs3" x1="0" y1="0" x2="0" y2="1"><stop offset="0" stop-color="#4aa6e6"/><stop offset="1" stop-color="#6cc0f6"/></linearGradient></defs><rect x="10.2" y="23.6" width="9.8" height="15.8" fill="url(#gs1)" stroke="#5a8812" stroke-width="1"/><rect x="20.4" y="8.5" width="10.2" height="30.9" fill="url(#gs2)" stroke="#8a2a22" stroke-width="1"/><rect x="30.8" y="18.5" width="9.8" height="20.9" fill="url(#gs3)" stroke="#2a6aa0" stroke-width="1"/><path d="M9.5 39.6 H41.2" stroke="#6a7a7a" stroke-width="1.2"/></svg></div>
<div class="t" style="left:466px;width:600px;text-align:center;top:424.25px;font-size:14px;line-height:17px;color:#222;font-weight:normal;">Statistics</div>
<div class="a" style="left:873px;top:370px;width:176px;height:86px;border:1px solid #d0d0d0"></div>
<div class="a" style="left:935px;top:375px;width:50px;height:50px;line-height:0"><svg width="50" height="50" viewBox="0 0 50 50"><defs><linearGradient id="gsrv" x1="0" y1="0" x2="0" y2="1"><stop offset="0" stop-color="#d6e4f0"/><stop offset="1" stop-color="#b6c6d6"/></linearGradient><linearGradient id="gkey" x1="0" y1="0" x2="0" y2="1"><stop offset="0" stop-color="#f6d060"/><stop offset="1" stop-color="#e8a830"/></linearGradient></defs><rect x="11.4" y="8.2" width="19.6" height="31" rx="2.4" fill="url(#gsrv)" stroke="#8596a8" stroke-width="1"/><path d="M14 12.8 H28.5 M14 17.4 H28.5 M14 21.8 H28.5 M14 26.2 H28.5" stroke="#7890a6" stroke-width="1.7"/><path d="M14 14.8 H28.5 M14 19.4 H28.5 M14 23.8 H28.5" stroke="#eaf4fc" stroke-width="1.2"/><path d="M22 31.3 H27.5" stroke="#4a5058" stroke-width="1"/><path d="M13.5 34.5 H25 M13.5 36.5 H24" stroke="#f4f8fb" stroke-width="1.1" stroke-dasharray="1.2 0.7"/><path d="M34.2 31.5 L25.8 39.6" stroke="#e0a030" stroke-width="3.6" stroke-linecap="round"/><circle cx="36.1" cy="28.9" r="5" fill="url(#gkey)" stroke="#c58a22" stroke-width="0.9"/><circle cx="36.2" cy="28.4" r="1.6" fill="none" stroke="#c89030" stroke-width="0.8"/></svg></div>
<div class="t" style="left:661px;width:600px;text-align:center;top:424.25px;font-size:14px;line-height:17px;color:#222;font-weight:normal;">VNC Pass</div>
<div class="a" style="left:287px;top:467px;width:176px;height:85px;border:1px solid #d0d0d0"></div>
<div class="a" style="left:350px;top:472px;width:50px;height:50px;line-height:0"><svg width="50" height="50" viewBox="0 0 50 50"><defs><linearGradient id="gnic" x1="0" y1="0" x2="0" y2="1"><stop offset="0" stop-color="#7cc070"/><stop offset="1" stop-color="#4a9a40"/></linearGradient></defs><path d="M8 12.2 H10.6 V37.6" fill="none" stroke="#6a6a6a" stroke-width="1.3"/><rect x="11.2" y="20.2" width="29.4" height="12.4" fill="url(#gnic)" stroke="#2f5a28" stroke-width="1"/><rect x="17.5" y="32.6" width="20" height="2.6" fill="#2f5a28"/><path d="M18.5 33.9 H30.5 M32 33.9 H36.5" stroke="#f0dc90" stroke-width="1.4" stroke-dasharray="1.2 0.6"/><rect x="14.8" y="23" width="4.2" height="2.2" fill="#d8f0b0"/><rect x="30.2" y="23.8" width="6.2" height="6" fill="#3a4a40"/><path d="M21 23 V29 M23.5 23 V29 M26.5 23 V29" stroke="#2c5028" stroke-width="1"/></svg></div>
<div class="t" style="left:75px;width:600px;text-align:center;top:521.25px;font-size:14px;line-height:17px;color:#222;font-weight:normal;">Internal IP</div>
<div class="a" style="left:482px;top:467px;width:176px;height:85px;border:1px solid #d0d0d0"></div>
<div class="a" style="left:545px;top:472px;width:50px;height:50px;line-height:0"><svg width="50" height="50" viewBox="0 0 50 50"><defs><linearGradient id="glic" x1="0" y1="0" x2="0" y2="1"><stop offset="0" stop-color="#c0dcf8"/><stop offset="1" stop-color="#8cc0ec"/></linearGradient><linearGradient id="gkey3" x1="0" y1="0" x2="0" y2="1"><stop offset="0" stop-color="#f6d060"/><stop offset="1" stop-color="#e8a830"/></linearGradient></defs><rect x="9.3" y="8.2" width="30.2" height="30.2" rx="0.8" fill="url(#glic)" stroke="#5472a2" stroke-width="1.1"/><rect x="11.3" y="10.2" width="26.2" height="26.2" fill="none" stroke="#d0e8fc" stroke-width="0.8" opacity="0.8"/><path d="M33.5 32 L27 39.5" stroke="#e3a632" stroke-width="3.6" stroke-linecap="round"/><circle cx="37.2" cy="29.2" r="4.9" fill="url(#gkey3)" stroke="#c58a22" stroke-width="0.9"/><circle cx="37.4" cy="28.6" r="1.3" fill="#fff3c0"/></svg></div>
<div class="t" style="left:270px;width:600px;text-align:center;top:521.25px;font-size:14px;line-height:17px;color:#222;font-weight:normal;">Licenses</div>
<div class="a" style="left:678px;top:467px;width:175px;height:85px;border:1px solid #d0d0d0"></div>
<div class="a" style="left:740px;top:472px;width:50px;height:50px;line-height:0"><svg width="50" height="50" viewBox="0 0 50 50"><defs><linearGradient id="gco1" x1="0" y1="0" x2="0" y2="1"><stop offset="0" stop-color="#7ab8f0"/><stop offset="1" stop-color="#3a80d0"/></linearGradient><linearGradient id="gco2" x1="0" y1="0" x2="0" y2="1"><stop offset="0" stop-color="#8ac060"/><stop offset="1" stop-color="#5a9a3a"/></linearGradient><linearGradient id="gco3" x1="0" y1="0" x2="0" y2="1"><stop offset="0" stop-color="#a8e040"/><stop offset="1" stop-color="#70c010"/></linearGradient></defs><path d="M23.5 31 Q23 21 31.3 20.5 Q39.5 21 39.3 31 Z" fill="url(#gco2)" stroke="#5a8a3a" stroke-width="0.6"/><circle cx="31.2" cy="14.2" r="5.2" fill="#f2c898"/><path d="M25.9 14 Q25.6 8 31.2 8 Q36.8 8 36.5 14 Q35 10.8 31.2 11.2 Q27.5 10.8 25.9 14 Z" fill="#8a5524"/><path d="M9.3 38.6 Q8.6 26.8 18 26.8 Q27 26.8 26.6 38.6 Z" fill="url(#gco1)" stroke="#2f66a8" stroke-width="0.7"/><path d="M14 27.2 L18 32.6 L22 27.2" fill="#f4f8fb"/><circle cx="18.6" cy="19.8" r="6.2" fill="#f2c594"/><path d="M12 22 Q11.2 12.2 18.6 12.2 Q26 12.2 25.2 22 Q24.2 17.2 18.6 17.6 Q13 17.2 12 22 Z" fill="#8a5524"/><path d="M26.6 31.2 H34.2 V28.6 L41.6 34.6 L34.2 40.6 V37.8 H26.6 Z" fill="url(#gco3)" stroke="#4e9a10" stroke-width="0.7"/></svg></div>
<div class="t" style="left:466px;width:600px;text-align:center;top:521.25px;font-size:14px;line-height:17px;color:#222;font-weight:normal;">Change Owner</div>
<div class="a" style="left:873px;top:467px;width:176px;height:85px;border:1px solid #d0d0d0"></div>
<div class="a" style="left:935px;top:472px;width:50px;height:50px;line-height:0"><svg width="50" height="50" viewBox="0 0 50 50"><defs></defs><path d="M11.6 8.2 H33.6 L40.6 15.2 V39.6 H11.6 Z" fill="#f9f9f9" stroke="#aeaeae" stroke-width="1"/><path d="M33.6 8.2 V15.2 H40.6" fill="#e8e8e8" stroke="#aeaeae" stroke-width="0.8"/><path d="M14 11.5 H31 M14 13 H31" stroke="#d6d6d6" stroke-width="0.9"/><path d="M16 16.3 H17.6 M16 19.5 H17.6 M16 22.5 H17.6 M16 25.9 H17.6 M16 29.3 H17.6 M16 32.5 H17.6 M16 35.8 H17.6" stroke="#444" stroke-width="1.1"/><path d="M20 16.3 H30.5 M20 19.5 H36.5 M20 22.5 H36.5 M20 25.9 H36 M20 29.3 H36.5 M20 32.5 H36.5 M20 35.8 H36" stroke="#5680b8" stroke-width="1.2" stroke-dasharray="5 1.3 3 1.3"/></svg></div>
<div class="t" style="left:661px;width:600px;text-align:center;top:521.25px;font-size:14px;line-height:17px;color:#222;font-weight:normal;">Custom Config</div>
<div class="a" style="left:287px;top:563px;width:176px;height:86px;border:1px solid #d0d0d0"></div>
<div class="a" style="left:350px;top:568px;width:50px;height:50px;line-height:0"><svg width="50" height="50" viewBox="0 0 50 50"><defs><linearGradient id="ghn" x1="0" y1="0" x2="0" y2="1"><stop offset="0" stop-color="#f7f9fb"/><stop offset="1" stop-color="#eef3f6"/></linearGradient><linearGradient id="ghn2" x1="0" y1="0" x2="0" y2="1"><stop offset="0" stop-color="#e8eef2"/><stop offset="1" stop-color="#f4fbff"/></linearGradient></defs><rect x="8.4" y="11.2" width="32.2" height="27.8" rx="1" fill="url(#ghn)" stroke="#b6b6b6" stroke-width="1.2"/><rect x="9.4" y="12.6" width="30.2" height="2.8" fill="#e4e4e4"/><rect x="11.5" y="19.5" width="26.3" height="10.8" rx="1.2" fill="url(#ghn2)" stroke="#5a8aa6" stroke-width="1.3"/><path d="M14.9 21.8 V28.1 M13.9 21.8 H15.9 M13.9 28.1 H15.9" stroke="#333" stroke-width="1"/></svg></div>
<div class="t" style="left:75px;width:600px;text-align:center;top:617.25px;font-size:14px;line-height:17px;color:#222;font-weight:normal;">Hostname</div>
<div class="a" style="left:482px;top:563px;width:176px;height:86px;border:1px solid #d0d0d0"></div>
<div class="a" style="left:545px;top:568px;width:50px;height:50px;line-height:0"><svg width="50" height="50" viewBox="0 0 50 50"><defs><linearGradient id="grbw" x1="0" y1="0" x2="0" y2="1"><stop offset="0" stop-color="#dedede"/><stop offset="1" stop-color="#cfcfcf"/></linearGradient></defs><rect x="9.3" y="8.4" width="32.2" height="32.4" rx="1.8" fill="url(#grbw)" stroke="#979797" stroke-width="1.2"/><rect x="10.8" y="9.9" width="29.2" height="29.4" rx="1.2" fill="none" stroke="#f2f2f2" stroke-width="0.9"/><path d="M17.6 28.5 Q18.2 35.6 25.5 35.6 Q34.8 35.6 34.8 25.2 Q34.8 15.2 25.5 15.2 Q19.5 15.2 18 21.5" fill="none" stroke="#474747" stroke-width="2.4"/><path d="M14.6 22.6 L21.2 22.6 L17.9 27.4 Z" fill="#474747"/></svg></div>
<div class="t" style="left:270px;width:600px;text-align:center;top:617.25px;font-size:14px;line-height:17px;color:#222;font-weight:normal;">Reset Bandwidth</div>
<div class="a" style="left:678px;top:563px;width:175px;height:86px;border:1px solid #d0d0d0"></div>
<div class="a" style="left:740px;top:568px;width:50px;height:50px;line-height:0"><svg width="50" height="50" viewBox="0 0 50 50"><defs><linearGradient id="gri" x1="0" y1="0" x2="0" y2="1"><stop offset="0" stop-color="#cfcfcf"/><stop offset="1" stop-color="#aeaeae"/></linearGradient></defs><path d="M15.8 11.5 H32.2 L39.5 18 V31 H9.3 V18 Z" fill="url(#gri)" stroke="#8c8c8c" stroke-width="1"/><path d="M17.5 15.3 H30.5" stroke="#eee" stroke-width="1.1"/><path d="M9.3 18.2 H39.5" stroke="#9a9a9a" stroke-width="0.8"/><path d="M10.5 20.8 H37 M13 25.5 H24" stroke="#a4a4a4" stroke-width="1.2"/><rect x="26.5" y="23.7" width="15" height="16" rx="0.8" fill="#3d9ae0" stroke="#2a6aa8" stroke-width="1"/><rect x="29.8" y="25.6" width="9" height="5" fill="#e8f2fb"/><rect x="30.2" y="34.2" width="8" height="5.4" fill="#e8f4fc"/><rect x="32.6" y="35.2" width="1.8" height="3.2" fill="#333"/></svg></div>
<div class="t" style="left:466px;width:600px;text-align:center;top:617.25px;font-size:14px;line-height:17px;color:#222;font-weight:normal;">Reinstall</div>
<div class="a" style="left:873px;top:563px;width:176px;height:86px;border:1px solid #d0d0d0"></div>
<div class="a" style="left:935px;top:568px;width:50px;height:50px;line-height:0"><svg width="50" height="50" viewBox="0 0 50 50"><defs><linearGradient id="gsrv2" x1="0" y1="0" x2="0" y2="1"><stop offset="0" stop-color="#d6e4f0"/><stop offset="1" stop-color="#b6c6d6"/></linearGradient><linearGradient id="gkey2" x1="0" y1="0" x2="0" y2="1"><stop offset="0" stop-color="#f6d060"/><stop offset="1" stop-color="#e8a830"/></linearGradient></defs><rect x="11.4" y="8.2" width="19.6" height="31" rx="2.4" fill="url(#gsrv2)" stroke="#8596a8" stroke-width="1"/><path d="M14 12.8 H28.5 M14 17.4 H28.5 M14 21.8 H28.5 M14 26.2 H28.5" stroke="#7890a6" stroke-width="1.7"/><path d="M14 14.8 H28.5 M14 19.4 H28.5 M14 23.8 H28.5" stroke="#eaf4fc" stroke-width="1.2"/><path d="M22 31.3 H27.5" stroke="#4a5058" stroke-width="1"/><path d="M13.5 34.5 H25 M13.5 36.5 H24" stroke="#f4f8fb" stroke-width="1.1" stroke-dasharray="1.2 0.7"/><path d="M34.2 31.5 L25.8 39.6" stroke="#e0a030" stroke-width="3.6" stroke-linecap="round"/><circle cx="36.1" cy="28.9" r="5" fill="url(#gkey2)" stroke="#c58a22" stroke-width="0.9"/><circle cx="36.2" cy="28.4" r="1.6" fill="none" stroke="#c89030" stroke-width="0.8"/></svg></div>
<div class="t" style="left:661px;width:600px;text-align:center;top:617.25px;font-size:14px;line-height:17px;color:#222;font-weight:normal;">Root/Admin Pass</div>
<div class="a" style="left:287px;top:660px;width:176px;height:85px;border:1px solid #d0d0d0"></div>
<div class="a" style="left:350px;top:665px;width:50px;height:50px;line-height:0"><svg width="50" height="50" viewBox="0 0 50 50"><defs><linearGradient id="grc" x1="0" y1="0" x2="0" y2="1"><stop offset="0" stop-color="#58b0f0"/><stop offset="1" stop-color="#2a86d8"/></linearGradient><linearGradient id="grc2" x1="0" y1="0" x2="0" y2="1"><stop offset="0" stop-color="#58b0f0"/><stop offset="1" stop-color="#2a86d8"/></linearGradient></defs><path d="M9.2 30.2 H30 M24.6 14.2 V30.2" stroke="#3e3e3e" stroke-width="1.5"/><rect x="8.5" y="8.3" width="13.2" height="11.4" fill="url(#grc)" stroke="#6a7a86" stroke-width="1"/><rect x="27.3" y="8.3" width="13.2" height="11.4" fill="url(#grc2)" stroke="#6a7a86" stroke-width="1"/><rect x="13" y="20" width="4.4" height="1.6" fill="#8a9aa8"/><path d="M21.7 14 H27.3" stroke="#3e3e3e" stroke-width="1.4"/><circle cx="24.4" cy="30.2" r="1.2" fill="#f0a040"/><path d="M38.6 23.6 Q33.5 20.5 31.4 25 Q30.4 28.4 32 30.2 L25 37.6 Q24 40 26.5 40 L33 33 Q37 33.5 39.6 31 L35.5 29.4 L35.2 25.6 Z" fill="#c9c9c9" stroke="#8c8c8c" stroke-width="0.8"/><path d="M30.5 33.5 L24.5 39.5" stroke="#4aa0e8" stroke-width="3.8" stroke-linecap="round"/></svg></div>
<div class="t" style="left:75px;width:600px;text-align:center;top:714.25px;font-size:14px;line-height:17px;color:#222;font-weight:normal;">Re-Configure</div>
<div class="a" style="left:482px;top:660px;width:176px;height:85px;border:1px solid #d0d0d0"></div>
<div class="a" style="left:545px;top:665px;width:50px;height:50px;line-height:0"><svg width="50" height="50" viewBox="0 0 50 50"><defs><linearGradient id="grb2" x1="0" y1="0" x2="0" y2="1"><stop offset="0" stop-color="#e6efaa"/><stop offset="1" stop-color="#d6e38c"/></linearGradient></defs><circle cx="25.4" cy="24.3" r="16.1" fill="url(#grb2)" stroke="#c3d57c" stroke-width="1.1"/><path d="M22.5 18.6 H17.4 V29.6 H21.5" fill="none" stroke="#8aa62c" stroke-width="2.4"/><path d="M20.5 16.3 L25 19.2 L20.8 22.2 Z" fill="#8aa62c"/><path d="M28.2 18.6 H33.6 V29.6 H29" fill="none" stroke="#8aa62c" stroke-width="2.4"/><path d="M30.5 26.7 L26 29.6 L30.2 32.7 Z" fill="#8aa62c"/><path d="M20 21 L30 28" stroke="#c9dc6a" stroke-width="2.5" opacity="0.6"/></svg></div>
<div class="t" style="left:270px;width:600px;text-align:center;top:714.25px;font-size:14px;line-height:17px;color:#222;font-weight:normal;">Reboot (Debug)</div>
<div class="a" style="left:678px;top:660px;width:175px;height:85px;border:1px solid #d0d0d0"></div>
<div class="a" style="left:740px;top:665px;width:50px;height:50px;line-height:0"><svg width="50" height="50" viewBox="0 0 50 50"><defs><linearGradient id="gmg" x1="0" y1="0" x2="0" y2="1"><stop offset="0" stop-color="#f4c450"/><stop offset="1" stop-color="#ecc838"/></linearGradient></defs><path d="M25.4 8.2 L41.6 24.5 L25.4 40.8 L9.2 24.5 Z" fill="url(#gmg)" stroke="#c9952a" stroke-width="1" stroke-linejoin="round"/><path d="M25.4 11.5 L38.3 24.5 L25.4 37.5 L12.5 24.5 Z" fill="none" stroke="#d89a20" stroke-width="0.8"/><path d="M21.8 28.4 V21.5" stroke="#6e4412" stroke-width="2"/><path d="M18.2 22.8 L21.8 18.8 L25.4 22.8 Z" fill="#6e4412"/><path d="M28.9 20 V26.8" stroke="#6e4412" stroke-width="2"/><path d="M25.6 25.6 L28.9 29.6 L32.2 25.6 Z" fill="#6e4412"/></svg></div>
<div class="t" style="left:466px;width:600px;text-align:center;top:714.25px;font-size:14px;line-height:17px;color:#222;font-weight:normal;">Migrate</div>
<div class="a" style="left:873px;top:660px;width:176px;height:85px;border:1px solid #d0d0d0"></div>
<div class="a" style="left:935px;top:665px;width:50px;height:50px;line-height:0"><svg width="50" height="50" viewBox="0 0 50 50"><defs></defs><path d="M9.4 8.2 H27.6 L34.4 15 V38.6 H9.4 Z" fill="#f8f8f8" stroke="#aaa" stroke-width="1"/><path d="M27.6 8.2 V15 H34.4" fill="#eee" stroke="#aaa" stroke-width="0.8"/><rect x="12.6" y="11.8" width="13.2" height="2.2" fill="#9aa8c0"/><path d="M12.4 18.3 H31.5 M12.4 29.2 H31.5 M12.4 31.4 H31.5 M12.4 33.5 H24" stroke="#8a96a8" stroke-width="0.9" stroke-dasharray="2.5 1"/><path d="M15.3 20 Q13 23.5 15.3 27 M28.7 20 Q31 23.5 28.7 27" fill="none" stroke="#8a6a4a" stroke-width="1.4"/><path d="M18 23.2 L19.4 26 L20.8 23.6 L22.2 26 L23.6 23.6 L25 26 L26.4 23.2" fill="none" stroke="#b48a62" stroke-width="1"/><path d="M26.3 32.2 L30.4 38.4 L42.2 26.6" fill="none" stroke="#4a8ed4" stroke-width="3" stroke-linejoin="round"/></svg></div>
<div class="t" style="left:661px;width:600px;text-align:center;top:714.25px;font-size:14px;line-height:17px;color:#222;font-weight:normal;">Rewrite Config</div>
<div class="a" style="left:287px;top:756px;width:176px;height:86px;border:1px solid #d0d0d0"></div>
<div class="a" style="left:350px;top:761px;width:50px;height:50px;line-height:0"><svg width="50" height="50" viewBox="0 0 50 50"><defs><linearGradient id="gplus2" x1="0" y1="0" x2="0" y2="1"><stop offset="0" stop-color="#86d040"/><stop offset="1" stop-color="#4ea020"/></linearGradient></defs><rect x="16.2" y="8.6" width="13.2" height="7.8" rx="0.8" fill="#8fd118" stroke="#4e7d0c" stroke-width="1"/><path d="M22.8 16.4 V19.4 M12.4 21.6 V19.4 H33.4 V21.6 M22.8 19.4 V21.6 M12.4 28.4 V30.7 M22.8 28.4 V30.7" fill="none" stroke="#666" stroke-width="1"/><rect x="8.5" y="21.6" width="7.8" height="6.8" rx="0.8" fill="#e2e2e2" stroke="#979797" stroke-width="1"/><rect x="18.5" y="21.6" width="8.6" height="6.8" rx="0.8" fill="#e2e2e2" stroke="#979797" stroke-width="1"/><rect x="29.6" y="21.6" width="7.8" height="6.8" rx="0.8" fill="#e2e2e2" stroke="#979797" stroke-width="1"/><rect x="8.5" y="30.7" width="7.8" height="6.8" rx="0.8" fill="#52aee9" stroke="#2a74b6" stroke-width="1"/><rect x="18.5" y="30.7" width="8.6" height="6.8" rx="0.8" fill="#52aee9" stroke="#2a74b6" stroke-width="1"/><circle cx="33.3" cy="33.2" r="7.2" fill="url(#gplus2)" stroke="#4a8a1a" stroke-width="0.8"/><path d="M33.3 28.4 V38 M28.5 33.2 H38.1" stroke="#fff" stroke-width="2.6"/></svg></div>
<div class="t" style="left:75px;width:600px;text-align:center;top:810.25px;font-size:14px;line-height:17px;color:#222;font-weight:normal;">IPv6 Subnets</div>
<div class="a" style="left:482px;top:756px;width:176px;height:86px;border:1px solid #d0d0d0"></div>
<div class="a" style="left:545px;top:761px;width:50px;height:50px;line-height:0"><svg width="50" height="50" viewBox="0 0 50 50"><defs></defs><path d="M15.2 8.8 H23.6 L25.4 11.8 V43.4 H8.6 V22 Q8.6 20 11 20 H13 Q15.2 20 15.2 18 Z" fill="#ec1133"/><path d="M35.8 8.8 H27.5 L27 11.8 V43.4 H42.6 V22 Q42.6 20 40.2 20 H38 Q35.8 20 35.8 18 Z" fill="#f3603f"/><rect x="24.4" y="12.2" width="2.7" height="31.2" fill="#3b1418"/><rect x="8.6" y="26.4" width="34" height="3" fill="#4a1a1e"/><rect x="8.6" y="33.3" width="34" height="2.8" fill="#4a1a1e"/></svg></div>
<div class="t" style="left:270px;width:600px;text-align:center;top:810.25px;font-size:14px;line-height:17px;color:#222;font-weight:normal;">Rescue</div>
<div class="a" style="left:254px;top:870.6px;width:1642px;height:1.5px;background:#5d656e"></div>
</body></html>
